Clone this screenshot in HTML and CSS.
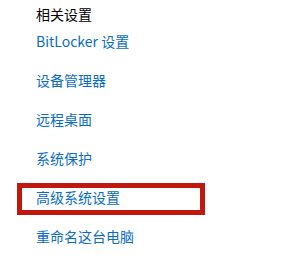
FILE: index.html
```html
<!DOCTYPE html>
<html lang="zh-CN">
<head>
    <meta charset="UTF-8">
    <title>相关设置</title>
    <link rel="stylesheet" href="styles.css">
</head>
<body>
    <div class="related">
        <h3 class="related-title">相关设置</h3>
        <ul class="related-links">
            <li><a href="#">BitLocker 设置</a></li>
            <li><a href="#">设备管理器</a></li>
            <li><a href="#">远程桌面</a></li>
            <li><a href="#">系统保护</a></li>
            <li class="marked"><a href="#">高级系统设置</a></li>
            <li><a href="#">重命名这台电脑</a></li>
        </ul>
    </div>
</body>
</html>
```

FILE: styles.css
```css
body {
    margin: 0;
    background: #fff;
    font-family: "Noto Sans CJK SC", "Noto Sans", sans-serif;
    font-size: 14px;
}

.related {
    padding: 4px 0 0 36px;
}

.related-title {
    margin: 0 0 7px;
    font-size: 14px;
    font-weight: normal;
    line-height: 20px;
    color: #000;
}

.related-links {
    list-style: none;
    margin: 0;
    padding: 0;
    display: flex;
    flex-direction: column;
    gap: 19px;
}

.related-links li {
    line-height: 20px;
    position: relative;
}

.related-links a {
    color: #0a6cc6;
    text-decoration: none;
}

/* red annotation box round one link */
.marked::before {
    content: "";
    position: absolute;
    left: -19px;
    top: -4px;
    width: 178px;
    height: 22px;
    border: 5px solid #c0180e;
}
```
